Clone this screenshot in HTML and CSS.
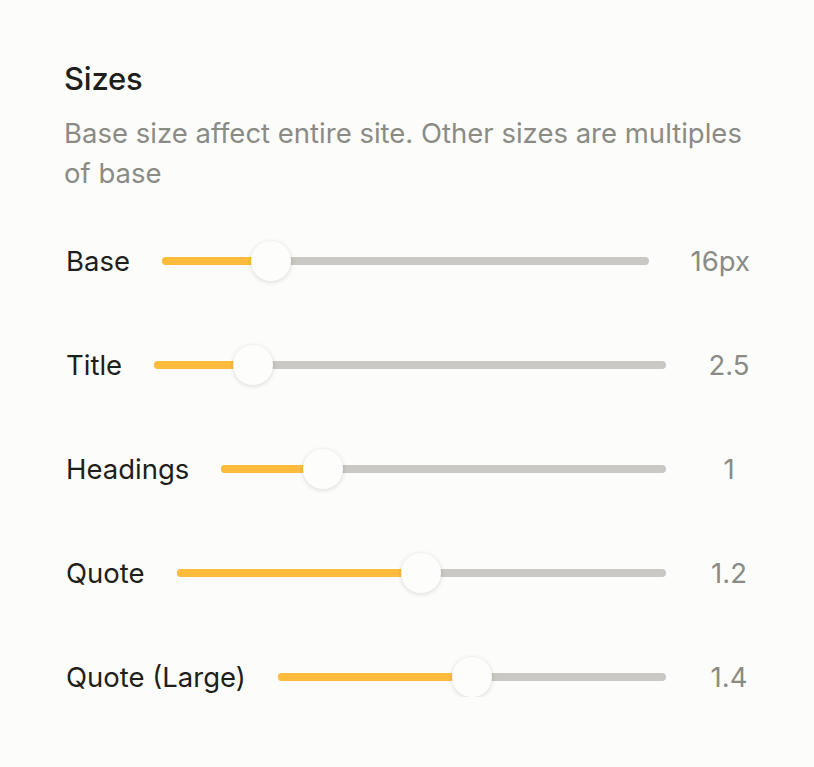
FILE: index.html
```html
<!DOCTYPE html>
<html>
<head>
<meta charset="utf-8">
<link rel="stylesheet" href="styles.css">
</head>
<body>
<section class="panel">
  <h2 class="title">Sizes</h2>
  <p class="desc">Base size affect entire site. Other sizes are multiples of base</p>
  <div class="rows">
    <div class="row">
      <span class="label">Base</span>
      <div class="slider" style="--p: 22.4%"><div class="fill"></div><div class="thumb"></div></div>
      <span class="value">16px</span>
    </div>
    <div class="row">
      <span class="label">Title</span>
      <div class="slider" style="--p: 19.4%"><div class="fill"></div><div class="thumb"></div></div>
      <span class="value">2.5</span>
    </div>
    <div class="row">
      <span class="label">Headings</span>
      <div class="slider" style="--p: 22.8%"><div class="fill"></div><div class="thumb"></div></div>
      <span class="value">1</span>
    </div>
    <div class="row">
      <span class="label">Quote</span>
      <div class="slider" style="--p: 50%"><div class="fill"></div><div class="thumb"></div></div>
      <span class="value">1.2</span>
    </div>
    <div class="row">
      <span class="label">Quote (Large)</span>
      <div class="slider" style="--p: 50%"><div class="fill"></div><div class="thumb"></div></div>
      <span class="value">1.4</span>
    </div>
  </div>
</section>
</body>
</html>
```
FILE: styles.css
```css
html, body {
  margin: 0;
  padding: 0;
  background: #fcfcfa;
}
body {
  font-family: Inter, "Noto Sans", sans-serif;
  color: #1e1e1b;
}
.panel {
  padding: 59px 64px 0 64px;
  width: 686px;
}
.title {
  margin: 0;
  font-size: 31px;
  font-weight: 500;
  line-height: 40px;
  letter-spacing: -0.2px;
}
.desc {
  margin: 14px 0 0 0;
  font-size: 27.5px;
  line-height: 40px;
  color: #8b8b86;
}
.rows {
  margin-top: 48px;
  display: flex;
  flex-direction: column;
  gap: 64px;
}
.row {
  display: flex;
  align-items: center;
  height: 40px;
  padding-left: 2px;
}
.label {
  font-size: 27.5px;
  white-space: nowrap;
  margin-right: 32px;
}
.slider {
  position: relative;
  flex: 1;
  height: 8px;
  border-radius: 4px;
  background: #c9c8c2;
}
.fill {
  position: absolute;
  left: 0;
  top: 0;
  bottom: 0;
  width: var(--p);
  background: #ffbc3c;
  border-radius: 4px;
}
.thumb {
  position: absolute;
  top: 50%;
  left: var(--p);
  width: 40px;
  height: 40px;
  margin: -20px 0 0 -20px;
  border-radius: 50%;
  background: #fdfdfc;
  box-shadow: 0 1px 5px rgba(0, 0, 0, 0.14);
}
.value {
  margin-left: 42px;
  min-width: 42px;
  text-align: center;
  font-size: 27.5px;
  color: #8b8b86;
}
```
